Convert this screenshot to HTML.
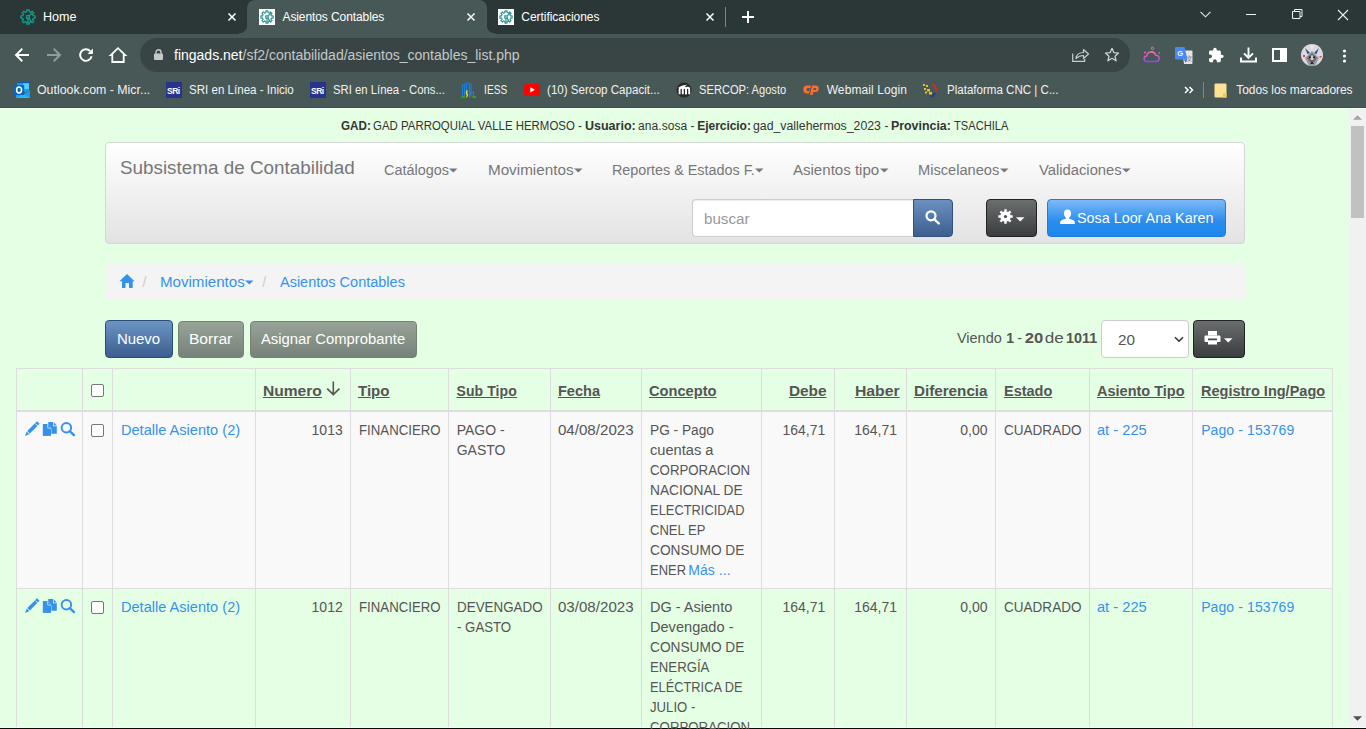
<!DOCTYPE html>
<html><head><meta charset="utf-8">
<style>
*{box-sizing:border-box;margin:0;padding:0}
html,body{width:1366px;height:729px;overflow:hidden;background:#e5ffe5;font-family:"Liberation Sans",sans-serif}
.a{position:absolute;white-space:nowrap}
svg.a{overflow:visible}
#tabs{position:absolute;left:0;top:0;width:1366px;height:34px;background:#2b3736}
#toolbar{position:absolute;left:0;top:34px;width:1366px;height:73px;background:#475857}
#omni{position:absolute;left:140px;top:38px;width:990px;height:34px;border-radius:17px;background:#394545}
.ct{color:#fff;font-size:12px;line-height:12px}
.bm{color:#f2f2f2;font-size:12px;line-height:12px;top:83.8px}
</style></head><body>
<!-- CHROME FRAME -->
<div id="tabs"></div>
<div id="toolbar"></div>
<div class="a" style="left:0;top:107px;width:1366px;height:1px;background:#3f4e4d"></div>
<div class="a" style="left:0;top:108px;width:1366px;height:1px;background:#effff0"></div>
<!-- active tab -->
<div class="a" style="left:247px;top:0px;width:240px;height:35px;background:#475857;border-radius:8px 8px 0 0"></div>
<div class="a" style="left:239px;top:25px;width:8px;height:9px;background:radial-gradient(circle at 0 0,#2b3736 8px,#475857 8.6px)"></div>
<div class="a" style="left:487px;top:25px;width:8px;height:9px;background:radial-gradient(circle at 100% 0,#2b3736 8px,#475857 8.6px)"></div>
<!-- favicons -->
<svg class="a" style="left:20px;top:9px" width="16" height="16" viewBox="0 0 16 16"><g fill="none" stroke="#13a08e" stroke-width="1.25" stroke-linejoin="round"><path d="M6.74 2.75 L6.76 0.91 L9.24 0.91 L9.26 2.75 L10.82 3.40 L12.14 2.11 L13.89 3.86 L12.60 5.18 L13.25 6.74 L15.09 6.76 L15.09 9.24 L13.25 9.26 L12.60 10.82 L13.89 12.14 L12.14 13.89 L10.82 12.60 L9.26 13.25 L9.24 15.09 L6.76 15.09 L6.74 13.25 L5.18 12.60 L3.86 13.89 L2.11 12.14 L3.40 10.82 L2.75 9.26 L0.91 9.24 L0.91 6.76 L2.75 6.74 L3.40 5.18 L2.11 3.86 L3.86 2.11 L5.18 3.40Z"/><rect x="6.7" y="6.7" width="2.6" height="2.6"/><path d="M9.3 6.7L12.5 3.8M8 9.3V14.5M9 9.3l2.5 3.5"/></g></svg>
<div class="a" style="left:259px;top:9px;width:16px;height:16px;background:#fff"></div>
<svg class="a" style="left:260px;top:10px" width="14" height="14" viewBox="0 0 14 14"><g fill="none" stroke="#2e9494" stroke-width="1.2" stroke-linejoin="round"><path d="M5.93 2.53 L5.93 0.89 L8.07 0.89 L8.07 2.53 L9.40 3.08 L10.57 1.93 L12.07 3.43 L10.92 4.60 L11.47 5.93 L13.11 5.93 L13.11 8.07 L11.47 8.07 L10.92 9.40 L12.07 10.57 L10.57 12.07 L9.40 10.92 L8.07 11.47 L8.07 13.11 L5.93 13.11 L5.93 11.47 L4.60 10.92 L3.43 12.07 L1.93 10.57 L3.08 9.40 L2.53 8.07 L0.89 8.07 L0.89 5.93 L2.53 5.93 L3.08 4.60 L1.93 3.43 L3.43 1.93 L4.60 3.08Z"/><rect x="5.8" y="5.8" width="2.4" height="2.4"/><path d="M8.2 5.8L11 3.2M7 8.2V12.5M7.9 8.2l2.3 3.2"/></g></svg>
<div class="a" style="left:498px;top:9px;width:16px;height:16px;background:#fff"></div>
<svg class="a" style="left:499px;top:10px" width="14" height="14" viewBox="0 0 14 14"><g fill="none" stroke="#2e9494" stroke-width="1.2" stroke-linejoin="round"><path d="M5.93 2.53 L5.93 0.89 L8.07 0.89 L8.07 2.53 L9.40 3.08 L10.57 1.93 L12.07 3.43 L10.92 4.60 L11.47 5.93 L13.11 5.93 L13.11 8.07 L11.47 8.07 L10.92 9.40 L12.07 10.57 L10.57 12.07 L9.40 10.92 L8.07 11.47 L8.07 13.11 L5.93 13.11 L5.93 11.47 L4.60 10.92 L3.43 12.07 L1.93 10.57 L3.08 9.40 L2.53 8.07 L0.89 8.07 L0.89 5.93 L2.53 5.93 L3.08 4.60 L1.93 3.43 L3.43 1.93 L4.60 3.08Z"/><rect x="5.8" y="5.8" width="2.4" height="2.4"/><path d="M8.2 5.8L11 3.2M7 8.2V12.5M7.9 8.2l2.3 3.2"/></g></svg>
<!-- tab texts -->
<!-- tab close buttons -->
<svg class="a" style="left:228px;top:13px" width="8" height="8"><path d="M0.5 0.5L7.5 7.5M7.5 0.5L0.5 7.5" stroke="#fff" stroke-width="1.5"/></svg>
<svg class="a" style="left:467px;top:13px" width="8" height="8"><path d="M0.5 0.5L7.5 7.5M7.5 0.5L0.5 7.5" stroke="#fff" stroke-width="1.5"/></svg>
<svg class="a" style="left:706px;top:13px" width="8" height="8"><path d="M0.5 0.5L7.5 7.5M7.5 0.5L0.5 7.5" stroke="#fff" stroke-width="1.5"/></svg>
<div class="a" style="left:725px;top:7px;width:1px;height:20px;background:#7b8786"></div>
<svg class="a" style="left:742px;top:11px" width="12" height="12"><path d="M6 0v12M0 6h12" stroke="#fff" stroke-width="1.9"/></svg>
<!-- window controls -->
<svg class="a" style="left:1200px;top:11px" width="11" height="7"><path d="M0.5 0.8L5.5 5.8L10.5 0.8" fill="none" stroke="#e8e8e8" stroke-width="1.1"/></svg>
<div class="a" style="left:1246px;top:14px;width:10px;height:1px;background:#f0f0f0"></div>
<svg class="a" style="left:1292px;top:9px" width="11" height="10"><path d="M0.5 2.5h7.5v7h-7.5z M2.5 2.5v-2h7.5v7h-2" fill="none" stroke="#f0f0f0" stroke-width="1"/></svg>
<svg class="a" style="left:1338px;top:10px" width="10" height="10"><path d="M0 0L10 10M10 0L0 10" stroke="#f0f0f0" stroke-width="1.1"/></svg>
<!-- toolbar icons -->
<svg class="a" style="left:14px;top:47px" width="16" height="16" viewBox="0 0 16 16"><path d="M15 8H2.5M8.3 1.8L2 8l6.3 6.2" fill="none" stroke="#fff" stroke-width="1.9"/></svg>
<svg class="a" style="left:46px;top:47px" width="16" height="16" viewBox="0 0 16 16"><path d="M1 8h12.5M7.7 1.8L14 8l-6.3 6.2" fill="none" stroke="#909d9c" stroke-width="1.9"/></svg>
<svg class="a" style="left:78px;top:47px" width="16" height="16" viewBox="0 0 16 16"><path d="M13.6 9.2A5.8 5.8 0 1 1 12.2 4.1" fill="none" stroke="#fff" stroke-width="1.9"/><path d="M14.9 1.6v5.4H9.5z" fill="#fff"/></svg>
<svg class="a" style="left:110px;top:47px" width="16" height="16" viewBox="0 0 16 16"><path d="M2.3 15V8.2H0.8L8 1.2l7.2 7H13.7V15z" fill="none" stroke="#fff" stroke-width="1.8" stroke-linejoin="miter"/></svg>
<div id="omni"></div>
<svg class="a" style="left:154px;top:49px" width="9" height="11" viewBox="0 0 9 11"><path d="M2 5V3.2a2.5 2.5 0 0 1 5 0V5" fill="none" stroke="#c4c8c8" stroke-width="1.4"/><rect x="0" y="4.6" width="9" height="6.4" rx="1" fill="#c4c8c8"/></svg>
<div class="a" style="left:174px;top:48px;font-size:14px;line-height:14px;color:#c3c9c8"><span style="color:#fff">fingads.net</span>/sf2/contabilidad/asientos_contables_list.php</div>
<!-- share & star -->
<svg class="a" style="left:1072px;top:48px" width="17" height="14" viewBox="0 0 17 14"><path d="M0.7 5.5V13.3h12V11" fill="none" stroke="#c8cccc" stroke-width="1.2"/><path d="M4 10.5C4.5 6 8 4.5 11.5 4.5V1.5l5 4.5-5 4.5V7.5C8.5 7.5 6 8.5 4 10.5z" fill="none" stroke="#c8cccc" stroke-width="1.2" stroke-linejoin="round"/></svg>
<svg class="a" style="left:1104px;top:47px" width="16" height="16" viewBox="0 0 16 16"><path d="M8 1.3l1.9 4.4 4.7.4-3.6 3.1 1.1 4.6L8 11.3l-4.1 2.5 1.1-4.6-3.6-3.1 4.7-.4z" fill="none" stroke="#d0d4d4" stroke-width="1.3" stroke-linejoin="round"/></svg>
<!-- extensions -->
<svg class="a" style="left:1143px;top:46px" width="18" height="17" viewBox="0 0 18 17"><defs><linearGradient id="wg" x1="0" y1="0" x2="0" y2="1"><stop offset="0" stop-color="#ff6aa0"/><stop offset="1" stop-color="#9a45f0"/></linearGradient></defs><path d="M4 15.5a2.7 2.7 0 0 1-.3-5.4 4.6 4.6 0 0 1 9-.9 3.2 3.2 0 0 1 1 6.3z" fill="none" stroke="url(#wg)" stroke-width="1.5"/><circle cx="9.5" cy="2.3" r="1.2" fill="none" stroke="#ff6aa0" stroke-width="1"/><circle cx="2" cy="6.5" r="0.9" fill="#ff6aa0"/><circle cx="16.3" cy="6.8" r="0.9" fill="#e060d0"/></svg>
<svg class="a" style="left:1175px;top:47px" width="18" height="17" viewBox="0 0 18 17"><path d="M7 3.5h9.5a1 1 0 0 1 1 1V16a1 1 0 0 1-1 1H9z" fill="#e4e4e4"/><path d="M1 0h8.5l3 12.5H1a1 1 0 0 1-1-1V1a1 1 0 0 1 1-1z" fill="#4a89f3"/><path d="M9 12.5l1.5 3 2-3z" fill="#3a6fc8"/><text x="2.3" y="9.3" font-family="Liberation Sans" font-weight="700" font-size="7.5" fill="#fff">G</text><text x="11.3" y="13.5" font-family="Liberation Sans" font-size="6.5" fill="#777">文</text></svg>
<svg class="a" style="left:1208px;top:47px" width="16" height="16" viewBox="0 0 24 24"><path d="M20.5 11H19V7c0-1.1-.9-2-2-2h-4V3.5C13 2.12 11.88 1 10.5 1S8 2.12 8 3.5V5H4c-1.1 0-1.99.9-1.99 2v3.8H3.5c1.49 0 2.7 1.21 2.7 2.7s-1.21 2.7-2.7 2.7H2V20c0 1.1.9 2 2 2h3.8v-1.5c0-1.49 1.21-2.7 2.7-2.7 1.490 0 2.7 1.21 2.7 2.7V22H17c1.1 0 2-.9 2-2v-4h1.5c1.38 0 2.5-1.12 2.5-2.5S21.88 11 20.5 11z" fill="#fff" transform="translate(-0.5 0) scale(1.04)"/></svg>
<svg class="a" style="left:1240px;top:47px" width="17" height="16" viewBox="0 0 17 16"><path d="M8.5 0.5v10M4 6.3l4.5 4.5L13 6.3" fill="none" stroke="#fff" stroke-width="1.9"/><path d="M1 10.5v4h15v-4" fill="none" stroke="#fff" stroke-width="1.9"/></svg>
<svg class="a" style="left:1272px;top:48px" width="15" height="14" viewBox="0 0 15 14"><rect x="1" y="1" width="13" height="12" fill="none" stroke="#fff" stroke-width="2"/><rect x="8" y="1" width="6" height="12" fill="#fff"/></svg>
<svg class="a" style="left:1301px;top:44px" width="22" height="22" viewBox="0 0 22 22"><defs><clipPath id="avc"><circle cx="11" cy="11" r="11"/></clipPath></defs><g clip-path="url(#avc)"><rect width="22" height="22" fill="#dcd8de"/><path d="M11 7L4 14l4 8h6l4-8z" fill="#9a9aa0"/><path d="M11 9l-5 5 3 4h4l3-4z" fill="#6a6a70"/><path d="M11 11l-2 2 1 3h2l1-3z" fill="#d0d0d4"/><path d="M8 12.5h2v1.5H8zM12 12.5h2v1.5h-2z" fill="#222"/><path d="M4 4l5 5-2.5 1z" fill="#1d4f9a"/><path d="M18 4l-5 5 2.5 1z" fill="#1d4f9a"/><path d="M9 20l2-3 2 3z" fill="#2a2a30"/><rect x="2" y="11" width="2" height="2" fill="#c05050"/><rect x="18.5" y="12" width="2" height="1.5" fill="#c05050"/><path d="M11 7l-2-6h4z" fill="#efe6ea"/></g></svg>
<svg class="a" style="left:1342px;top:49px" width="5" height="14"><circle cx="2.5" cy="2" r="1.6" fill="#fff"/><circle cx="2.5" cy="7" r="1.6" fill="#fff"/><circle cx="2.5" cy="12" r="1.6" fill="#fff"/></svg>
<!-- bookmarks -->
<svg class="a" style="left:14px;top:82px" width="17" height="16" viewBox="0 0 17 16"><rect x="3" y="0" width="12" height="9" fill="#1ea0e6"/><rect x="9" y="1" width="6" height="6" fill="#4fd0ff"/><rect x="3" y="0" width="12" height="1.2" fill="#0a5bb5"/><rect x="3" y="8" width="12" height="2" fill="#1ea0e6"/><path d="M2 8.5l7 3.5 7-4V16H2z" fill="#1aa0ea"/><path d="M9 12l7-4" stroke="#0a6cc8" stroke-width="0.6"/><path d="M2 16l7-4.2L16 16z" fill="#2ab8f8"/><rect x="0" y="3" width="10.2" height="10" rx="0.6" fill="#0a64c0"/><ellipse cx="5.1" cy="8" rx="2.5" ry="2.9" fill="none" stroke="#fff" stroke-width="1.5"/></svg>
<svg class="a" style="left:166px;top:82px" width="16" height="16" viewBox="0 0 16 16"><rect width="16" height="16" fill="#27348b"/><text x="1" y="11.5" font-family="Liberation Sans" font-weight="700" font-size="8.5" fill="#fff" letter-spacing="-0.5">SRi</text></svg>
<svg class="a" style="left:310px;top:82px" width="16" height="16" viewBox="0 0 16 16"><rect width="16" height="16" fill="#27348b"/><text x="1" y="11.5" font-family="Liberation Sans" font-weight="700" font-size="8.5" fill="#fff" letter-spacing="-0.5">SRi</text></svg>
<svg class="a" style="left:461px;top:82px" width="15" height="16" viewBox="0 0 15 16"><g fill="none" stroke="#1f7fe0" stroke-width="1.1"><path d="M1.5 15V3.5l2-1"/><path d="M3.5 14V2.5l2.3-1.5 2.2 0 2 1.2V14"/><path d="M5.5 11V2M8.3 11V2"/><path d="M10 12V10.5l2.5-0.3V15"/></g><path d="M5 8.5h2l-0.8 2 1 2.5-1.2 2.5H5l0.7-2.5-1-1.5z" fill="#f5d90a"/><path d="M8 9.5h1.5v6H8z" fill="#1f7fe0"/><path d="M10 12.5l1.6 0.2-0.3 3H10z" fill="#e52020"/><path d="M0.5 15h3.5M11.5 15h3.5" stroke="#16c016" stroke-width="1.3"/></svg>
<svg class="a" style="left:524px;top:84px" width="16" height="12" viewBox="0 0 16 12"><rect width="16" height="11.5" rx="2.8" fill="#ff0000"/><path d="M6.3 3.2v5.2l4.6-2.6z" fill="#fff"/></svg>
<svg class="a" style="left:676px;top:82px" width="16" height="16" viewBox="0 0 16 16"><circle cx="8" cy="8" r="7.6" fill="#2a2a2a"/><path d="M3.6 12.3V7.2c0-1 .7-1.5 1.6-1.5s1.6.5 1.6 1.5v5.1M6.8 12.3V7.2c0-1 .7-1.5 1.6-1.5s1.6.5 1.6 1.5v5.1" fill="none" stroke="#fff" stroke-width="1.9"/><path d="M10 12.3V7.2c0-1 .7-1.5 1.6-1.5s1.6.5 1.6 1.5v5.1" fill="none" stroke="#fff" stroke-width="1.9"/><path d="M1.6 5.8l5-2.3 4.5-0.8-2.6 2.3z" fill="#fff"/></svg>
<svg class="a" style="left:802px;top:84px" width="18" height="12" viewBox="0 0 18 12"><path d="M5.5 1.5H9L7 9.5H5A4 4 0 0 1 5.5 1.5z" fill="#ff6c2c"/><path d="M10 1.5h3.5a3.2 3.2 0 0 1 0 6.4H11.5L10.5 11H8z" fill="#ff6c2c"/><path d="M6 4h2l-1 3H6a1.5 1.5 0 0 1 0-3zM11.8 4h1.5a1 1 0 0 1 0 2h-2z" fill="#475857"/></svg>
<svg class="a" style="left:922px;top:82px" width="17" height="16" viewBox="0 0 17 16"><g fill="#e8c51e"><rect x="1" y="2" width="2" height="2"/><rect x="4" y="3" width="2" height="2"/><rect x="2" y="6" width="2" height="2"/><rect x="5" y="7" width="3" height="2.5"/><rect x="7" y="10" width="3" height="2.5"/><rect x="3" y="9.5" width="2" height="2"/></g><path d="M10 2.5a5 5 0 0 1 3 8" fill="none" stroke="#d32c2c" stroke-width="2"/><path d="M13 10.5a5 5 0 0 1-5 4" fill="none" stroke="#2c3e8c" stroke-width="2.3"/></svg>
<svg class="a" style="left:1184px;top:86px" width="10" height="8" viewBox="0 0 10 8"><path d="M1 1l3 3-3 3M5.5 1l3 3-3 3" fill="none" stroke="#fff" stroke-width="1.5"/></svg>
<div class="a" style="left:1203px;top:82px;width:1px;height:16px;background:#7b8786"></div>
<svg class="a" style="left:1214px;top:83px" width="13" height="15" viewBox="0 0 13 15"><path d="M0.5 1.5a1 1 0 0 1 1-1h10a1 1 0 0 1 1 1V14.5H1.5a1 1 0 0 1-1-1z" fill="#fde293"/><path d="M9 10.5h3.5v4H9z" fill="#f5c84b"/></svg>

<!-- PAGE -->
<!-- navbar -->
<div class="a" style="left:105px;top:142px;width:1140px;height:102px;border:1px solid #d6d6d6;border-radius:4px;background:linear-gradient(#fff 0,#e3e3e3 100%);box-shadow:none"></div>
<svg class="a" style="left:449px;top:168px" width="9" height="5"><path d="M0 0.5h8.5L4.25 4.6z" fill="#777"/></svg>
<svg class="a" style="left:574px;top:168px" width="9" height="5"><path d="M0 0.5h8.5L4.25 4.6z" fill="#777"/></svg>
<svg class="a" style="left:755px;top:168px" width="9" height="5"><path d="M0 0.5h8.5L4.25 4.6z" fill="#777"/></svg>
<svg class="a" style="left:880px;top:168px" width="9" height="5"><path d="M0 0.5h8.5L4.25 4.6z" fill="#777"/></svg>
<svg class="a" style="left:1000px;top:168px" width="9" height="5"><path d="M0 0.5h8.5L4.25 4.6z" fill="#777"/></svg>
<svg class="a" style="left:1122px;top:168px" width="9" height="5"><path d="M0 0.5h8.5L4.25 4.6z" fill="#777"/></svg>
<!-- search -->
<div class="a" style="left:692px;top:199px;width:222px;height:38px;background:#fff;border:1px solid #ccc;border-right:0;border-radius:4px 0 0 4px;box-shadow:inset 0 1px 1px rgba(0,0,0,.075)"></div>
<div class="a" style="left:913px;top:199px;width:40px;height:38px;border:1px solid #2f5180;border-radius:0 4px 4px 0;background:linear-gradient(#6a91c1,#3d5f8e)"></div>
<svg class="a" style="left:924px;top:208.5px" width="17" height="17" viewBox="0 0 17 17"><circle cx="7" cy="6.8" r="4.5" fill="none" stroke="#fff" stroke-width="2.2"/><path d="M10.2 10.1l4.6 4.4" stroke="#fff" stroke-width="2.4" stroke-linecap="round"/></svg>
<!-- gear btn -->
<div class="a" style="left:986px;top:199px;width:51px;height:38px;border:1px solid #222;border-radius:4px;background:linear-gradient(#6a6e6e,#3a3d3d)"></div>
<svg class="a" style="left:998px;top:209.3px" width="15" height="15" viewBox="0 0 15 15"><path d="M6.29 2.44 L6.30 0.30 L8.70 0.30 L8.71 2.44 L10.22 3.07 L11.74 1.56 L13.44 3.26 L11.93 4.78 L12.56 6.29 L14.70 6.30 L14.70 8.70 L12.56 8.71 L11.93 10.22 L13.44 11.74 L11.74 13.44 L10.22 11.93 L8.71 12.56 L8.70 14.70 L6.30 14.70 L6.29 12.56 L4.78 11.93 L3.26 13.44 L1.56 11.74 L3.07 10.22 L2.44 8.71 L0.30 8.70 L0.30 6.30 L2.44 6.29 L3.07 4.78 L1.56 3.26 L3.26 1.56 L4.78 3.07Z" fill="#fff"/><circle cx="7.5" cy="7.5" r="1.6" fill="#4a4d4d"/></svg>
<svg class="a" style="left:1016px;top:216.7px" width="9" height="5"><path d="M0 0.3h8.5L4.25 4.6z" fill="#fff"/></svg>
<!-- user btn -->
<div class="a" style="left:1047px;top:199px;width:179px;height:38px;border:1px solid #1b7ce2;border-radius:4px;background:linear-gradient(#7cbaf6,#2a8cee 60%,#1d86ec)"></div>
<svg class="a" style="left:1060px;top:209px" width="15" height="15" viewBox="0 0 15 15"><path d="M7.5 0.5c2.2 0 3.6 1.6 3.6 4 0 2-1 3.6-2 4.2v1c2.8.5 5.2 1.7 5.7 3V15H0.2v-2.3c.5-1.3 2.9-2.5 5.7-3v-1c-1-.6-2-2.2-2-4.2 0-2.4 1.4-4 3.6-4z" fill="#fff"/></svg>
<!-- breadcrumb -->
<div class="a" style="left:105px;top:264px;width:1140px;height:36px;border-radius:4px;background:#f4f4f4"></div>
<svg class="a" style="left:119px;top:274px" width="16" height="14" viewBox="0 0 16 14"><path d="M8 0L15.6 7.2H13.7V14H10V9H6.5V14H3V7.2H0.4z" fill="#3592ec"/></svg>
<svg class="a" style="left:245px;top:280px" width="9" height="5"><path d="M0 0.5h8.5L4.25 4.6z" fill="#3592ec"/></svg>
<!-- buttons row -->
<div class="a" style="left:105px;top:320px;width:68px;height:38px;border:1px solid #2c4c78;border-radius:4px;background:linear-gradient(#6b94c4,#3b5f8f)"></div>
<div class="a" style="left:178px;top:321px;width:66px;height:37px;border:1px solid #778277;border-radius:4px;background:linear-gradient(#98a398,#76817a)"></div>
<div class="a" style="left:250px;top:321px;width:167px;height:37px;border:1px solid #778277;border-radius:4px;background:linear-gradient(#98a398,#76817a)"></div>
<!-- select -->
<div class="a" style="left:1101px;top:320px;width:88px;height:38px;background:#fff;border:1px solid #ccc;border-radius:4px"></div>
<svg class="a" style="left:1174px;top:336px" width="10" height="7" viewBox="0 0 10 7"><path d="M1 1.2l4 4 4-4" fill="none" stroke="#333" stroke-width="1.6"/></svg>
<!-- print btn -->
<div class="a" style="left:1193px;top:320px;width:52px;height:38px;border:1px solid #222;border-radius:4px;background:linear-gradient(#6a6e6e,#3a3d3d)"></div>
<svg class="a" style="left:1204px;top:331px" width="17" height="15" viewBox="0 0 17 15"><rect x="4" y="0" width="9" height="4.5" fill="#fff"/><rect x="0.5" y="4.5" width="16" height="6.5" rx="1" fill="#fff"/><rect x="4" y="7.5" width="9" height="2" fill="#454848"/><rect x="4" y="9.5" width="9" height="4" fill="#fff"/></svg>
<svg class="a" style="left:1223.5px;top:337.5px" width="9" height="5"><path d="M0 0.3h8.5L4.25 4.6z" fill="#fff"/></svg>
<!-- table -->
<div class="a" style="left:16px;top:412px;width:1317px;height:177px;background:#f9f9f9"></div>
<div class="a" style="left:16px;top:368px;width:1317px;height:1px;background:#ddd"></div>
<div class="a" style="left:16px;top:410px;width:1317px;height:2px;background:#ddd"></div>
<div class="a" style="left:16px;top:588px;width:1317px;height:1px;background:#ddd"></div>
<div class="a" style="left:16px;top:368px;width:1px;height:361px;background:#ddd"></div>
<div class="a" style="left:82px;top:368px;width:1px;height:361px;background:#ddd"></div>
<div class="a" style="left:112px;top:368px;width:1px;height:361px;background:#ddd"></div>
<div class="a" style="left:255px;top:368px;width:1px;height:361px;background:#ddd"></div>
<div class="a" style="left:350px;top:368px;width:1px;height:361px;background:#ddd"></div>
<div class="a" style="left:448px;top:368px;width:1px;height:361px;background:#ddd"></div>
<div class="a" style="left:550px;top:368px;width:1px;height:361px;background:#ddd"></div>
<div class="a" style="left:641px;top:368px;width:1px;height:361px;background:#ddd"></div>
<div class="a" style="left:761px;top:368px;width:1px;height:361px;background:#ddd"></div>
<div class="a" style="left:834px;top:368px;width:1px;height:361px;background:#ddd"></div>
<div class="a" style="left:906px;top:368px;width:1px;height:361px;background:#ddd"></div>
<div class="a" style="left:995px;top:368px;width:1px;height:361px;background:#ddd"></div>
<div class="a" style="left:1089px;top:368px;width:1px;height:361px;background:#ddd"></div>
<div class="a" style="left:1192px;top:368px;width:1px;height:361px;background:#ddd"></div>
<div class="a" style="left:1332px;top:368px;width:1px;height:361px;background:#ddd"></div>
<!-- checkboxes -->
<div class="a" style="left:91px;top:384px;width:13px;height:13px;border:1px solid #767676;border-radius:2px;background:#fff"></div>
<div class="a" style="left:91px;top:424px;width:13px;height:13px;border:1px solid #767676;border-radius:2px;background:#fff"></div>
<div class="a" style="left:91px;top:601px;width:13px;height:13px;border:1px solid #767676;border-radius:2px;background:#fff"></div>
<!-- sort arrow -->
<svg class="a" style="left:326px;top:381px" width="14" height="15" viewBox="0 0 14 15"><path d="M7.3 0.5v13M1.2 7.6L7.3 13.6 13.4 7.6" fill="none" stroke="#555" stroke-width="1.6"/></svg>
<!-- row icons -->
<svg class="a" style="left:22px;top:418px" width="56" height="22" viewBox="22 418 56 22"><path d="M28.3 432.6L38.3 422.6" stroke="#3592ec" stroke-width="3.6"/><path d="M25 435.9L26.9 431.2 29.8 434.1z" fill="#3592ec"/><path d="M26.4 430.7L30.3 434.6M35.4 423.6L39.3 427.5" stroke="#f9f9f9" stroke-width="0.9"/><path d="M48.2 421.9H53V426.2H56.8V433.8H48.2z" fill="#3592ec"/><path d="M53.7 422.2L56.8 425.5H53.7z" fill="#3592ec"/><path d="M42.9 424.1H47.4V428.6H50.9V435.8H42.9z" fill="#3592ec" stroke="#f9f9f9" stroke-width="1" paint-order="stroke"/><path d="M42.9 424.1H47.4V428.6H50.9V435.8H42.9z" fill="#3592ec"/><path d="M47.6 424.1L51.4 428.2H47.6z" fill="#f9f9f9"/><path d="M48.1 424.4L50.9 427.7H48.1z" fill="#3592ec"/><circle cx="66.4" cy="427.7" r="4.75" fill="none" stroke="#3592ec" stroke-width="1.9"/><path d="M69.7 431L73.9 435.2" stroke="#3592ec" stroke-width="2.4" stroke-linecap="round"/></svg>
<svg class="a" style="left:22px;top:595px" width="56" height="22" viewBox="22 418 56 22"><path d="M28.3 432.6L38.3 422.6" stroke="#3592ec" stroke-width="3.6"/><path d="M25 435.9L26.9 431.2 29.8 434.1z" fill="#3592ec"/><path d="M26.4 430.7L30.3 434.6M35.4 423.6L39.3 427.5" stroke="#e5ffe5" stroke-width="0.9"/><path d="M48.2 421.9H53V426.2H56.8V433.8H48.2z" fill="#3592ec"/><path d="M53.7 422.2L56.8 425.5H53.7z" fill="#3592ec"/><path d="M42.9 424.1H47.4V428.6H50.9V435.8H42.9z" fill="#3592ec" stroke="#e5ffe5" stroke-width="1" paint-order="stroke"/><path d="M42.9 424.1H47.4V428.6H50.9V435.8H42.9z" fill="#3592ec"/><path d="M47.6 424.1L51.4 428.2H47.6z" fill="#e5ffe5"/><path d="M48.1 424.4L50.9 427.7H48.1z" fill="#3592ec"/><circle cx="66.4" cy="427.7" r="4.75" fill="none" stroke="#3592ec" stroke-width="1.9"/><path d="M69.7 431L73.9 435.2" stroke="#3592ec" stroke-width="2.4" stroke-linecap="round"/></svg>
<!-- scrollbar -->
<div class="a" style="left:1349px;top:109px;width:17px;height:618px;background:#f1f1f1"></div>
<div class="a" style="left:1351px;top:126px;width:13px;height:92px;background:#c1c1c1"></div>
<svg class="a" style="left:1353px;top:115px" width="9" height="5"><path d="M0 4.8L4.5 0.2 9 4.8z" fill="#a3a3a3"/></svg>
<svg class="a" style="left:1353px;top:716px" width="9" height="5"><path d="M0 0.2L4.5 4.8 9 0.2z" fill="#505050"/></svg>
<div class="a" style="left:0;top:727px;width:1366px;height:1px;background:#f4fff4"></div>
<div class="a" style="left:0;top:728px;width:1366px;height:1px;background:#0a0a0a"></div>
<div class='a' style='left:37.28px;top:83.84px;font-size:12px;line-height:12px;color:#f2f2f2;transform:scaleX(1.0295);transform-origin:0.72px 0'>Outlook.com - Micr...</div>
<div class='a' style='left:189.48px;top:83.84px;font-size:12px;line-height:12px;color:#f2f2f2;transform:scaleX(0.9637);transform-origin:0.72px 0'>SRI en Línea - Inicio</div>
<div class='a' style='left:333.28px;top:83.84px;font-size:12px;line-height:12px;color:#f2f2f2;transform:scaleX(0.9412);transform-origin:0.72px 0'>SRI en Línea - Cons...</div>
<div class='a' style='left:484.28px;top:83.84px;font-size:12px;line-height:12px;color:#f2f2f2;transform:scaleX(0.8449);transform-origin:0.72px 0'>IESS</div>
<div class='a' style='left:547.38px;top:83.84px;font-size:12px;line-height:12px;color:#f2f2f2;transform:scaleX(0.9646);transform-origin:0.72px 0'>(10) Sercop Capacit...</div>
<div class='a' style='left:699.08px;top:83.84px;font-size:12px;line-height:12px;color:#f2f2f2;transform:scaleX(0.9265);transform-origin:0.72px 0'>SERCOP: Agosto</div>
<div class='a' style='left:826.68px;top:83.84px;font-size:12px;line-height:12px;color:#f2f2f2;letter-spacing:0.090px'>Webmail Login</div>
<div class='a' style='left:946.58px;top:83.84px;font-size:12px;line-height:12px;color:#f2f2f2;transform:scaleX(0.9626);transform-origin:0.72px 0'>Plataforma CNC | C...</div>
<div class='a' style='left:1236.28px;top:83.84px;font-size:12px;line-height:12px;color:#f2f2f2;letter-spacing:-0.055px'>Todos los marcadores</div>
<div class='a' style='left:43.28px;top:10.94px;font-size:12px;line-height:12px;color:#fff;transform:scaleX(1.0466);transform-origin:0.72px 0'>Home</div>
<div class='a' style='left:282.48px;top:10.94px;font-size:12px;line-height:12px;color:#fff;letter-spacing:-0.092px'>Asientos Contables</div>
<div class='a' style='left:521.28px;top:10.94px;font-size:12px;line-height:12px;color:#fff;letter-spacing:-0.040px'>Certificaciones</div>
<div class='a' style='left:341.08px;top:119.64px;font-size:12px;line-height:12px;color:#333;font-weight:700;transform:scaleX(0.9715);transform-origin:0.72px 0'>GAD:</div>
<div class='a' style='left:373.18px;top:119.64px;font-size:12px;line-height:12px;color:#333;transform:scaleX(0.9525);transform-origin:0.72px 0'>GAD PARROQUIAL VALLE HERMOSO</div>
<div class='a' style='left:577.88px;top:119.64px;font-size:12px;line-height:12px;color:#333'>-</div>
<div class='a' style='left:584.78px;top:119.64px;font-size:12px;line-height:12px;color:#333;font-weight:700;transform:scaleX(1.0434);transform-origin:0.72px 0'>Usuario:</div>
<div class='a' style='left:637.98px;top:119.64px;font-size:12px;line-height:12px;color:#333;letter-spacing:0.077px'>ana.sosa</div>
<div class='a' style='left:690.48px;top:119.64px;font-size:12px;line-height:12px;color:#333'>-</div>
<div class='a' style='left:697.28px;top:119.64px;font-size:12px;line-height:12px;color:#333;font-weight:700;letter-spacing:-0.043px'>Ejercicio:</div>
<div class='a' style='left:753.28px;top:119.64px;font-size:12px;line-height:12px;color:#333;transform:scaleX(1.0257);transform-origin:0.72px 0'>gad_vallehermos_2023</div>
<div class='a' style='left:884.48px;top:119.64px;font-size:12px;line-height:12px;color:#333'>-</div>
<div class='a' style='left:891.28px;top:119.64px;font-size:12px;line-height:12px;color:#333;font-weight:700;transform:scaleX(1.0320);transform-origin:0.72px 0'>Provincia:</div>
<div class='a' style='left:953.58px;top:119.64px;font-size:12px;line-height:12px;color:#333;transform:scaleX(0.9258);transform-origin:0.72px 0'>TSACHILA</div>
<div class='a' style='left:119.92px;top:159.26px;font-size:18px;line-height:18px;color:#777;transform:scaleX(1.0474);transform-origin:1.08px 0'>Subsistema de Contabilidad</div>
<div class='a' style='left:383.76px;top:162.95px;font-size:14px;line-height:14px;color:#777;transform:scaleX(1.0299);transform-origin:0.84px 0'>Catálogos</div>
<div class='a' style='left:487.56px;top:162.95px;font-size:14px;line-height:14px;color:#777;transform:scaleX(1.0895);transform-origin:0.84px 0'>Movimientos</div>
<div class='a' style='left:612.36px;top:162.95px;font-size:14px;line-height:14px;color:#777;transform:scaleX(1.0253);transform-origin:0.84px 0'>Reportes &amp; Estados F.</div>
<div class='a' style='left:793.46px;top:162.95px;font-size:14px;line-height:14px;color:#777;transform:scaleX(1.0765);transform-origin:0.84px 0'>Asientos tipo</div>
<div class='a' style='left:918.36px;top:162.95px;font-size:14px;line-height:14px;color:#777;transform:scaleX(1.0453);transform-origin:0.84px 0'>Miscelaneos</div>
<div class='a' style='left:1038.66px;top:162.95px;font-size:14px;line-height:14px;color:#777;transform:scaleX(1.0563);transform-origin:0.84px 0'>Validaciones</div>
<div class='a' style='left:703.66px;top:212.15px;font-size:14px;line-height:14px;color:#999;transform:scaleX(1.0879);transform-origin:0.84px 0'>buscar</div>
<div class='a' style='left:1076.96px;top:210.65px;font-size:14px;line-height:14px;color:#fff;transform:scaleX(1.0249);transform-origin:0.84px 0'>Sosa Loor Ana Karen</div>
<div class='a' style='left:142.46px;top:275.15px;font-size:14px;line-height:14px;color:#ccc'>/</div>
<div class='a' style='left:159.56px;top:275.15px;font-size:14px;line-height:14px;color:#3592ec;transform:scaleX(1.0791);transform-origin:0.84px 0'>Movimientos</div>
<div class='a' style='left:262.16px;top:275.15px;font-size:14px;line-height:14px;color:#ccc'>/</div>
<div class='a' style='left:279.96px;top:275.15px;font-size:14px;line-height:14px;color:#3592ec;transform:scaleX(1.0356);transform-origin:0.84px 0'>Asientos Contables</div>
<div class='a' style='left:117.46px;top:331.95px;font-size:14px;line-height:14px;color:#fff;transform:scaleX(1.0673);transform-origin:0.84px 0'>Nuevo</div>
<div class='a' style='left:189.16px;top:331.95px;font-size:14px;line-height:14px;color:#fff;transform:scaleX(1.1148);transform-origin:0.84px 0'>Borrar</div>
<div class='a' style='left:260.76px;top:331.95px;font-size:14px;line-height:14px;color:#fff;transform:scaleX(1.0587);transform-origin:0.84px 0'>Asignar Comprobante</div>
<div class='a' style='left:956.66px;top:331.25px;font-size:14px;line-height:14px;color:#555;transform:scaleX(1.0321);transform-origin:0.84px 0'>Viendo</div>
<div class='a' style='left:1006.16px;top:331.25px;font-size:14px;line-height:14px;color:#555;font-weight:700'>1</div>
<div class='a' style='left:1017.16px;top:331.25px;font-size:14px;line-height:14px;color:#555'>-</div>
<div class='a' style='left:1024.66px;top:331.25px;font-size:14px;line-height:14px;color:#555;font-weight:700;transform:scaleX(1.1872);transform-origin:0.84px 0'>20</div>
<div class='a' style='left:1044.66px;top:331.25px;font-size:14px;line-height:14px;color:#555;transform:scaleX(1.2232);transform-origin:0.84px 0'>de</div>
<div class='a' style='left:1065.66px;top:331.25px;font-size:14px;line-height:14px;color:#555;font-weight:700;transform:scaleX(1.0281);transform-origin:0.84px 0'>1011</div>
<div class='a' style='left:1117.76px;top:333.15px;font-size:14px;line-height:14px;color:#555;transform:scaleX(1.0937);transform-origin:0.84px 0'>20</div>
<div class='a' style='left:263.36px;top:383.95px;font-size:14px;line-height:14px;color:#555;font-weight:700;transform:scaleX(1.1147);transform-origin:0.84px 0;text-decoration:underline;text-underline-offset:1px'>Numero</div>
<div class='a' style='left:358.36px;top:383.95px;font-size:14px;line-height:14px;color:#555;font-weight:700;transform:scaleX(1.0791);transform-origin:0.84px 0;text-decoration:underline;text-underline-offset:1px'>Tipo</div>
<div class='a' style='left:456.46px;top:383.95px;font-size:14px;line-height:14px;color:#555;font-weight:700;letter-spacing:0.108px;text-decoration:underline;text-underline-offset:1px'>Sub Tipo</div>
<div class='a' style='left:558.46px;top:383.95px;font-size:14px;line-height:14px;color:#555;font-weight:700;transform:scaleX(1.0390);transform-origin:0.84px 0;text-decoration:underline;text-underline-offset:1px'>Fecha</div>
<div class='a' style='left:649.46px;top:383.95px;font-size:14px;line-height:14px;color:#555;font-weight:700;transform:scaleX(1.0464);transform-origin:0.84px 0;text-decoration:underline;text-underline-offset:1px'>Concepto</div>
<div class='a' style='left:788.96px;top:383.95px;font-size:14px;line-height:14px;color:#555;font-weight:700;transform:scaleX(1.0997);transform-origin:0.84px 0;text-decoration:underline;text-underline-offset:1px'>Debe</div>
<div class='a' style='left:854.56px;top:383.95px;font-size:14px;line-height:14px;color:#555;font-weight:700;transform:scaleX(1.1261);transform-origin:0.84px 0;text-decoration:underline;text-underline-offset:1px'>Haber</div>
<div class='a' style='left:914.36px;top:383.95px;font-size:14px;line-height:14px;color:#555;font-weight:700;transform:scaleX(1.0875);transform-origin:0.84px 0;text-decoration:underline;text-underline-offset:1px'>Diferencia</div>
<div class='a' style='left:1003.56px;top:383.95px;font-size:14px;line-height:14px;color:#555;font-weight:700;transform:scaleX(1.0354);transform-origin:0.84px 0;text-decoration:underline;text-underline-offset:1px'>Estado</div>
<div class='a' style='left:1096.96px;top:383.95px;font-size:14px;line-height:14px;color:#555;font-weight:700;transform:scaleX(1.0368);transform-origin:0.84px 0;text-decoration:underline;text-underline-offset:1px'>Asiento Tipo</div>
<div class='a' style='left:1200.76px;top:383.95px;font-size:14px;line-height:14px;color:#555;font-weight:700;transform:scaleX(1.0363);transform-origin:0.84px 0;text-decoration:underline;text-underline-offset:1px'>Registro Ing/Pago</div>
<div class='a' style='left:121.16px;top:423.15px;font-size:14px;line-height:14px;color:#3592ec;transform:scaleX(1.0415);transform-origin:0.84px 0'>Detalle Asiento (2)</div>
<div class='a' style='left:311.58px;top:423.15px;font-size:14px;line-height:14px;color:#555'>1013</div>
<div class='a' style='left:358.96px;top:423.15px;font-size:14px;line-height:14px;color:#555;transform:scaleX(0.9437);transform-origin:0.84px 0'>FINANCIERO</div>
<div class='a' style='left:456.66px;top:423.15px;font-size:14px;line-height:14px;color:#555'>PAGO -</div>
<div class='a' style='left:456.66px;top:443.15px;font-size:14px;line-height:14px;color:#555'>GASTO</div>
<div class='a' style='left:558.46px;top:423.15px;font-size:14px;line-height:14px;color:#555;transform:scaleX(1.0804);transform-origin:0.84px 0'>04/08/2023</div>
<div class='a' style='left:649.66px;top:423.15px;font-size:14px;line-height:14px;color:#555;transform:scaleX(0.9781);transform-origin:0.84px 0'>PG - Pago</div>
<div class='a' style='left:649.66px;top:443.15px;font-size:14px;line-height:14px;color:#555;transform:scaleX(1.0468);transform-origin:0.84px 0'>cuentas a</div>
<div class='a' style='left:649.66px;top:463.15px;font-size:14px;line-height:14px;color:#555;transform:scaleX(0.9461);transform-origin:0.84px 0'>CORPORACION</div>
<div class='a' style='left:649.66px;top:483.15px;font-size:14px;line-height:14px;color:#555;transform:scaleX(0.9815);transform-origin:0.84px 0'>NACIONAL DE</div>
<div class='a' style='left:649.66px;top:503.15px;font-size:14px;line-height:14px;color:#555;transform:scaleX(0.9197);transform-origin:0.84px 0'>ELECTRICIDAD</div>
<div class='a' style='left:649.66px;top:523.15px;font-size:14px;line-height:14px;color:#555;transform:scaleX(0.9305);transform-origin:0.84px 0'>CNEL EP</div>
<div class='a' style='left:649.66px;top:543.15px;font-size:14px;line-height:14px;color:#555;transform:scaleX(0.9781);transform-origin:0.84px 0'>CONSUMO DE</div>
<div class='a' style='left:649.66px;top:563.15px;font-size:14px;line-height:14px;color:#555;transform:scaleX(0.9268);transform-origin:0.84px 0'>ENER</div>
<div class='a' style='left:782.51px;top:423.15px;font-size:14px;line-height:14px;color:#555'>164,71</div>
<div class='a' style='left:854.21px;top:423.15px;font-size:14px;line-height:14px;color:#555'>164,71</div>
<div class='a' style='left:960.29px;top:423.15px;font-size:14px;line-height:14px;color:#555'>0,00</div>
<div class='a' style='left:1003.66px;top:423.15px;font-size:14px;line-height:14px;color:#555;transform:scaleX(0.9663);transform-origin:0.84px 0'>CUADRADO</div>
<div class='a' style='left:1097.16px;top:423.15px;font-size:14px;line-height:14px;color:#3592ec;transform:scaleX(1.0479);transform-origin:0.84px 0'>at - 225</div>
<div class='a' style='left:1201.16px;top:423.15px;font-size:14px;line-height:14px;color:#3592ec;letter-spacing:0.102px'>Pago - 153769</div>
<div class='a' style='left:688.16px;top:563.15px;font-size:14px;line-height:14px;color:#3592ec;letter-spacing:0.077px'>Más ...</div>
<div class='a' style='left:121.16px;top:600.15px;font-size:14px;line-height:14px;color:#3592ec;transform:scaleX(1.0415);transform-origin:0.84px 0'>Detalle Asiento (2)</div>
<div class='a' style='left:311.58px;top:600.15px;font-size:14px;line-height:14px;color:#555'>1012</div>
<div class='a' style='left:358.96px;top:600.15px;font-size:14px;line-height:14px;color:#555;transform:scaleX(0.9437);transform-origin:0.84px 0'>FINANCIERO</div>
<div class='a' style='left:456.66px;top:600.15px;font-size:14px;line-height:14px;color:#555;transform:scaleX(0.9568);transform-origin:0.84px 0'>DEVENGADO</div>
<div class='a' style='left:456.66px;top:620.15px;font-size:14px;line-height:14px;color:#555;transform:scaleX(0.9437);transform-origin:0.84px 0'>- GASTO</div>
<div class='a' style='left:558.46px;top:600.15px;font-size:14px;line-height:14px;color:#555;transform:scaleX(1.0804);transform-origin:0.84px 0'>03/08/2023</div>
<div class='a' style='left:649.66px;top:600.15px;font-size:14px;line-height:14px;color:#555;transform:scaleX(1.0374);transform-origin:0.84px 0'>DG - Asiento</div>
<div class='a' style='left:649.66px;top:620.15px;font-size:14px;line-height:14px;color:#555;transform:scaleX(1.0421);transform-origin:0.84px 0'>Devengado -</div>
<div class='a' style='left:649.66px;top:640.15px;font-size:14px;line-height:14px;color:#555;transform:scaleX(0.9781);transform-origin:0.84px 0'>CONSUMO DE</div>
<div class='a' style='left:649.66px;top:660.15px;font-size:14px;line-height:14px;color:#555;transform:scaleX(0.9407);transform-origin:0.84px 0'>ENERGÍA</div>
<div class='a' style='left:649.66px;top:680.15px;font-size:14px;line-height:14px;color:#555;transform:scaleX(0.9149);transform-origin:0.84px 0'>ELÉCTRICA DE</div>
<div class='a' style='left:649.66px;top:700.15px;font-size:14px;line-height:14px;color:#555;transform:scaleX(0.9387);transform-origin:0.84px 0'>JULIO -</div>
<div class='a' style='left:649.66px;top:720.15px;font-size:14px;line-height:14px;color:#555;transform:scaleX(0.9461);transform-origin:0.84px 0'>CORPORACION</div>
<div class='a' style='left:782.51px;top:600.15px;font-size:14px;line-height:14px;color:#555'>164,71</div>
<div class='a' style='left:854.21px;top:600.15px;font-size:14px;line-height:14px;color:#555'>164,71</div>
<div class='a' style='left:960.29px;top:600.15px;font-size:14px;line-height:14px;color:#555'>0,00</div>
<div class='a' style='left:1003.66px;top:600.15px;font-size:14px;line-height:14px;color:#555;transform:scaleX(0.9663);transform-origin:0.84px 0'>CUADRADO</div>
<div class='a' style='left:1097.16px;top:600.15px;font-size:14px;line-height:14px;color:#3592ec;transform:scaleX(1.0479);transform-origin:0.84px 0'>at - 225</div>
<div class='a' style='left:1201.16px;top:600.15px;font-size:14px;line-height:14px;color:#3592ec;letter-spacing:0.102px'>Pago - 153769</div>
</body></html>
